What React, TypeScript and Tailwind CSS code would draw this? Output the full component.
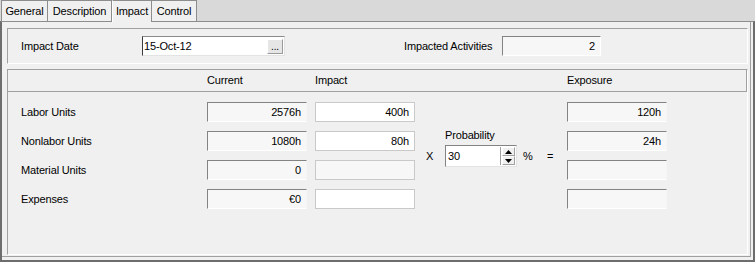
import React from "react";

const tabs = [
    { name: "General", w: "w-[47px]" },
    { name: "Description", w: "w-[64px]" },
    { name: "Impact", w: "w-[40px]", active: true },
    { name: "Control", w: "w-[45px]" },
];

function ReadOnlyBox({ value }: { value?: string }) {
    return (
        <div className="w-[100px] h-[20px] bg-[#f7f7f7] border-t border-l border-t-[#838383] border-l-[#838383] border-b border-r border-b-white border-r-[#f4f4f4] flex items-center justify-end pr-[5px]">
            {value}
        </div>
    );
}

function EditBox({ value, disabled }: { value?: string; disabled?: boolean }) {
    return (
        <div
            className={`w-[100px] h-[20px] border border-[#c9c9c9] flex items-center justify-end pr-[5px] ${
                disabled ? "bg-[#f7f7f7]" : "bg-white"
            }`}
        >
            {value}
        </div>
    );
}

const rows = [
    { label: "Labor Units", current: "2576h", impact: "400h", exposure: "120h" },
    { label: "Nonlabor Units", current: "1080h", impact: "80h", exposure: "24h" },
    { label: "Material Units", current: "0", impact: "", exposure: "", disabled: true },
    { label: "Expenses", current: "€0", impact: "", exposure: "" },
];

export default function App() {
    return (
        <div className="w-[755px] h-[262px] bg-[#d9d9d9] text-[11px] leading-[13px] tracking-[-0.15px] text-[#000] font-['Liberation_Sans',Arial,sans-serif] flex flex-col">
            {/* tab strip */}
            <div className="h-[21px] flex items-end pl-[1px]">
                {tabs.map((t) => (
                    <div
                        key={t.name}
                        className={`${t.w} flex items-center justify-center border-t border-r border-[#8d8d8d] first:border-l bg-[#f0f0f0] ${
                            t.active
                                ? "h-[22px] -mb-px relative z-10 border-l border-l-white"
                                : "h-[21px]"
                        }`}
                    >
                        {t.name}
                    </div>
                ))}
            </div>

            {/* panel */}
            <div className="flex-1 flex flex-col bg-[#f0f0f0] border-t border-t-[#8d8d8d] border-x-2 border-b-2 border-x-[#6d6d6d] border-b-[#6d6d6d]">
                <div className="flex-1 flex flex-col mr-[2px] mb-[3px] border-r border-b border-[#a0a0a0] pl-[5px] pr-[2px] pt-[6px] pb-[1px]">
                    {/* date group */}
                    <div className="h-[36px] flex items-center pl-[13px] border-t border-l border-[#a0a0a0] border-b border-r border-b-white border-r-white">
                        <span className="w-[121px]">Impact Date</span>
                        <div className="w-[143px] h-[20px] bg-white border-t border-t-[#8a8a8a] border-l border-l-[#3c3c3c] border-b border-r border-b-[#e3e3e3] border-r-[#e3e3e3] flex items-center justify-between pl-[1px] pr-[1px]">
                            <span>15-Oct-12</span>
                            <div className="w-[16px] h-[15px] bg-[#e6e6e6] border border-t-white border-l-white border-b-[#9a9a9a] border-r-[#9a9a9a] flex items-end justify-center text-[10px] leading-[10px] pb-[1px]">
                                ...
                            </div>
                        </div>
                        <span className="ml-[119px] w-[98px]">Impacted Activities</span>
                        <div className="w-[99px] h-[20px] bg-[#f7f7f7] border-t border-l border-[#838383] border-b border-r border-b-white border-r-white flex items-center justify-end pr-[5px]">
                            2
                        </div>
                    </div>

                    {/* values group */}
                    <div className="flex-1 mt-[5px] flex flex-col border-t border-l border-[#a0a0a0] border-b border-r border-b-white border-r-white">
                        <div className="h-[22px] flex items-center border-b border-r border-[#a0a0a0] pl-[199px]">
                            <span className="w-[108px]">Current</span>
                            <span className="w-[252px]">Impact</span>
                            <span>Exposure</span>
                        </div>

                        <div className="flex pl-[13px] pt-[10px]">
                            <div className="flex flex-col gap-[9px]">
                                {rows.map((r) => (
                                    <div key={r.label} className="flex items-center">
                                        <span className="w-[186px]">{r.label}</span>
                                        <ReadOnlyBox value={r.current} />
                                        <div className="w-[8px]" />
                                        <EditBox value={r.impact} disabled={r.disabled} />
                                    </div>
                                ))}
                            </div>

                            <div className="w-[152px] pt-[27px] flex flex-col">
                                <span className="pl-[30px]">Probability</span>
                                <div className="flex items-center mt-[3px] pl-[11px]">
                                    <span className="w-[19px]">X</span>
                                    <div className="w-[72px] h-[22px] bg-white border-t border-l border-[#838383] border-b border-r border-b-[#e3e3e3] border-r-[#e3e3e3] flex">
                                        <span className="flex-1 flex items-center pl-[2px]">30</span>
                                        <div className="w-[16px] flex flex-col border-l border-[#a0a0a0] my-[1px] pl-[1px] pr-[1px]">
                                            <div className="flex-1 flex items-center justify-center bg-[#f0f0f0] border border-t-white border-l-white border-b-[#a0a0a0] border-r-[#a0a0a0]">
                                                <svg width="7" height="4" viewBox="0 0 7 4">
                                                    <path d="M3.5 0 L7 4 L0 4 Z" fill="#000" />
                                                </svg>
                                            </div>
                                            <div className="flex-1 flex items-center justify-center bg-[#f0f0f0] border border-t-white border-l-white border-b-[#a0a0a0] border-r-[#a0a0a0]">
                                                <svg width="7" height="4" viewBox="0 0 7 4">
                                                    <path d="M0 0 L7 0 L3.5 4 Z" fill="#000" />
                                                </svg>
                                            </div>
                                        </div>
                                    </div>
                                    <span className="ml-[6px] w-[24px]">%</span>
                                    <span>=</span>
                                </div>
                            </div>

                            <div className="flex flex-col gap-[9px]">
                                {rows.map((r) => (
                                    <ReadOnlyBox key={r.label} value={r.exposure} />
                                ))}
                            </div>
                        </div>
                    </div>
                </div>
            </div>
        </div>
    );
}
